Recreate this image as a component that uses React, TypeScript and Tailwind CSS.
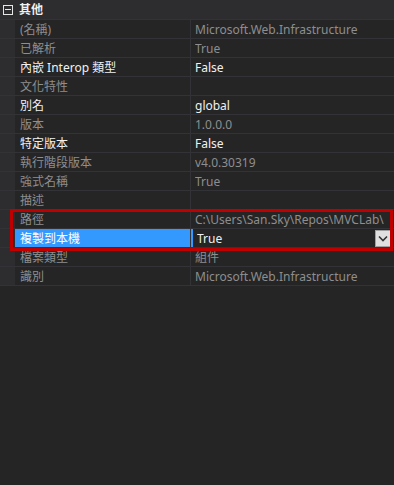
const rows: { name: string; value: string; active?: boolean }[] = [
  { name: "(名稱)", value: "Microsoft.Web.Infrastructure" },
  { name: "已解析", value: "True" },
  { name: "內嵌 Interop 類型", value: "False", active: true },
  { name: "文化特性", value: "" },
  { name: "別名", value: "global", active: true },
  { name: "版本", value: "1.0.0.0" },
  { name: "特定版本", value: "False", active: true },
  { name: "執行階段版本", value: "v4.0.30319" },
  { name: "強式名稱", value: "True" },
  { name: "描述", value: "" },
  { name: "路徑", value: "C:\\Users\\San.Sky\\Repos\\MVCLab\\" },
  { name: "複製到本機", value: "True", active: true },
  { name: "檔案類型", value: "組件" },
  { name: "識別", value: "Microsoft.Web.Infrastructure" },
];

function Row({ name, value, active, selected }: { name: string; value: string; active?: boolean; selected?: boolean }) {
  return (
    <div className="flex h-[19px] border-b border-[#333337]">
      <div className="w-[15px] shrink-0 bg-[#2d2d30]" />
      <div
        className={
          selected
            ? "w-[176px] shrink-0 bg-[#3399ff] text-white pl-[5px] pt-px leading-[17px] border-r border-[#333337]"
            : "w-[176px] shrink-0 pl-[5px] pt-px leading-[17px] border-r border-[#333337] " +
              (active ? "text-[#f1f1f1]" : "text-[#8e8e8e]")
        }
      >
        {name}
      </div>
      <div
        className={
          "flex-1 min-w-0 flex items-center pl-[4px] overflow-hidden whitespace-nowrap " +
          (selected ? "border-l-2 border-[#3399ff] pl-[2px] " : "") +
          (active ? "text-[#f1f1f1]" : "text-[#8e8e8e]")
        }
      >
        <span className="flex-1 pt-px leading-[17px] overflow-hidden">{value}</span>
        {selected && (
          <span className="w-[16px] h-[17px] mr-[3px] bg-[#e0e0e0] border border-[#a0a0a0] flex items-center justify-center">
            <svg width="10" height="7" viewBox="0 0 10 7">
              <path d="M1 1.5 L5 5.5 L9 1.5" stroke="#333" strokeWidth="1.6" fill="none" />
            </svg>
          </span>
        )}
      </div>
    </div>
  );
}

export default function App() {
  return (
    <div
      className="relative w-[394px] h-[485px] bg-[#252526] text-[12px] overflow-hidden"
      style={{ fontFamily: '"Noto Sans", "Noto Sans CJK TC", sans-serif' }}
    >
      <div className="flex items-center h-[20px] bg-[#2d2d30] border-b border-[#333337]">
        <span className="ml-[3px] w-[10px] h-[10px] border border-[#e6e6e6] flex items-center justify-center">
          <span className="w-[6px] h-px bg-[#e6e6e6]" />
        </span>
        <span className="ml-[6px] font-bold text-[#f1f1f1]">其他</span>
      </div>
      {rows.map((r, i) => (
        <Row key={r.name} {...r} selected={i === 11} />
      ))}
      <div className="absolute left-[10px] top-[209px] w-[383px] h-[42px] border-[3px] border-[#c00000] pointer-events-none" />
    </div>
  );
}
